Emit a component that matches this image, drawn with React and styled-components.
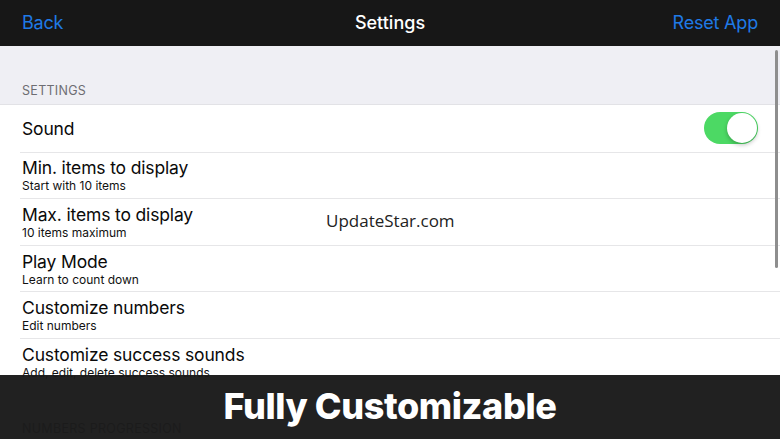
import React from "react";
import styled, { createGlobalStyle } from "styled-components";

const GlobalStyle = createGlobalStyle`
  html, body {
    margin: 0;
    padding: 0;
    background: #ffffff;
  }
  body {
    font-family: Inter, "Liberation Sans", sans-serif;
  }
`;

const Screen = styled.div`
  position: relative;
  width: 780px;
  height: 439px;
  overflow: hidden;
  background: #efeff4;
`;

const NavBar = styled.div`
  display: flex;
  align-items: center;
  justify-content: space-between;
  height: 46px;
  padding: 0 22px;
  background: #171717;
  position: relative;
`;

const NavLink = styled.span`
  color: #1f7ae6;
  font-size: 18px;
  letter-spacing: -0.2px;
  padding-bottom: 1px;
`;

const NavTitle = styled.span`
  position: absolute;
  left: 0;
  right: 0;
  text-align: center;
  color: #ffffff;
  font-size: 18px;
  font-weight: 500;
  padding-bottom: 1px;
  pointer-events: none;
`;

const SectionHeader = styled.div`
  height: 59px;
  display: flex;
  align-items: flex-end;
  padding: 0 22px 6px;
  box-sizing: border-box;
  color: #6d6d72;
  font-size: 12.5px;
  letter-spacing: 0.3px;
  border-bottom: 1px solid #e2e2e6;
`;

const List = styled.div`
  background: #ffffff;
`;

const Row = styled.div`
  display: flex;
  align-items: center;
  height: 46.6px;
  margin-left: 20px;
  padding: 0 22px 0 2px;
  box-sizing: border-box;
  border-top: ${(p) => (p.first ? "none" : "1px solid #e6e6e8")};
`;

const Texts = styled.div`
  flex: 1;
  display: flex;
  flex-direction: column;
`;

const Title = styled.div`
  color: #0a0a0a;
  font-size: 17.5px;
  line-height: 21px;
  letter-spacing: -0.15px;
`;

const Sub = styled.div`
  color: #111111;
  font-size: 12px;
  line-height: 15px;
`;

const Toggle = styled.div`
  width: 54px;
  height: 32px;
  border-radius: 16px;
  background: #4cd964;
  position: relative;
  &::after {
    content: "";
    position: absolute;
    right: 1px;
    top: 1px;
    width: 30px;
    height: 30px;
    border-radius: 50%;
    background: #ffffff;
    box-shadow: 0 2px 4px rgba(0, 0, 0, 0.25);
  }
`;

const Gap = styled.div`
  height: 36px;
  background: #efeff4;
`;

const LowerHeader = styled.div`
  padding: 0 22px;
  color: #6d6d72;
  font-size: 12.5px;
  letter-spacing: 0.3px;
`;

const Scrollbar = styled.div`
  position: absolute;
  right: 2px;
  top: 50px;
  width: 3px;
  height: 218px;
  border-radius: 2px;
  background: #8e8e8e;
`;

const Watermark = styled.div`
  position: absolute;
  left: 326px;
  top: 209px;
  font-family: "Open Sans", "Noto Sans", sans-serif;
  font-size: 17px;
  color: #222222;
`;

const Banner = styled.div`
  position: absolute;
  left: 0;
  right: 0;
  bottom: 0;
  height: 64px;
  background: rgba(24, 24, 24, 0.96);
  display: flex;
  align-items: center;
  justify-content: center;
  color: #ffffff;
  font-family: Inter, "Liberation Sans", sans-serif;
  font-weight: 800;
  font-size: 36px;
  letter-spacing: -0.4px;
  padding-bottom: 2px;
  box-sizing: border-box;
`;

const rows = [
  { title: "Sound", toggle: true },
  { title: "Min. items to display", sub: "Start with 10 items" },
  { title: "Max. items to display", sub: "10 items maximum" },
  { title: "Play Mode", sub: "Learn to count down" },
  { title: "Customize numbers", sub: "Edit numbers" },
  { title: "Customize success sounds", sub: "Add, edit, delete success sounds" },
];

export default function App() {
  return (
    <Screen>
      <GlobalStyle />
      <NavBar>
        <NavLink>Back</NavLink>
        <NavTitle>Settings</NavTitle>
        <NavLink>Reset App</NavLink>
      </NavBar>
      <SectionHeader>SETTINGS</SectionHeader>
      <List>
        {rows.map((r, i) => (
          <Row key={r.title} first={i === 0}>
            <Texts>
              <Title>{r.title}</Title>
              {r.sub && <Sub>{r.sub}</Sub>}
            </Texts>
            {r.toggle && <Toggle />}
          </Row>
        ))}
      </List>
      <Gap />
      <LowerHeader>NUMBERS PROGRESSION</LowerHeader>
      <Scrollbar />
      <Watermark>UpdateStar.com</Watermark>
      <Banner>Fully Customizable</Banner>
    </Screen>
  );
}
